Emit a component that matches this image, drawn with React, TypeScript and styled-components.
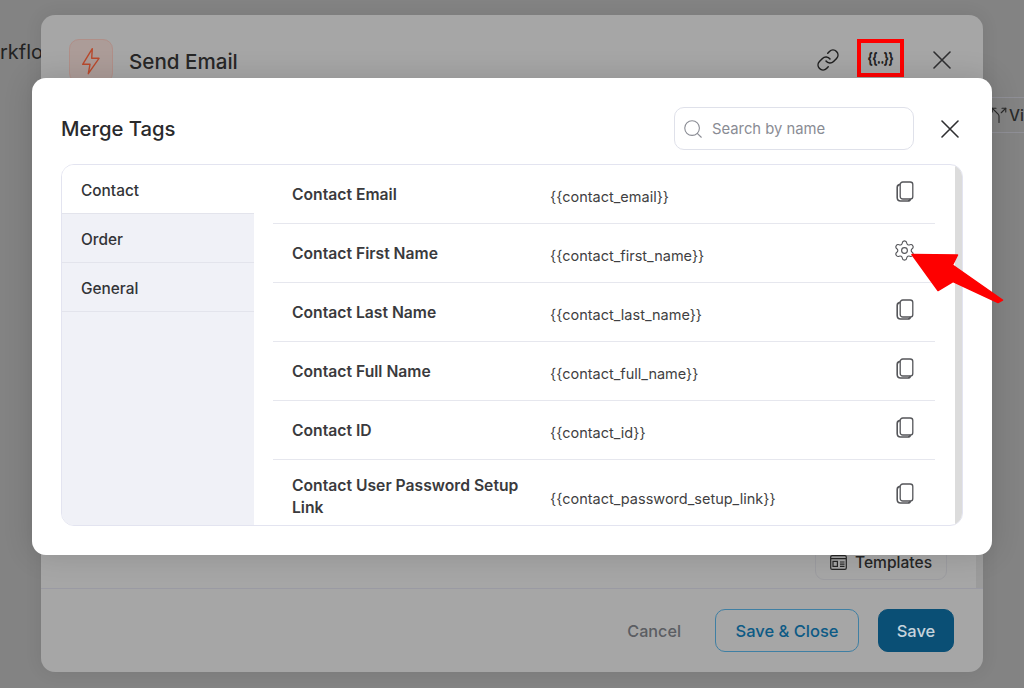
import styled, { createGlobalStyle } from 'styled-components';
import { Link, Search, Settings, Split } from 'lucide-react';

const GlobalStyle = createGlobalStyle`
  html, body {
    margin: 0;
    padding: 0;
    background: #838383;
    font-family: Inter, "Liberation Sans", sans-serif;
  }
  * { box-sizing: border-box; }
`;

const Page = styled.div`
  position: relative;
  width: 1024px;
  height: 688px;
  padding: 15px 41px 16px;
  overflow: hidden;
  background: #838383;
`;

const BehindTitle = styled.span`
  position: absolute;
  left: 0;
  top: 40px;
  font-size: 20px;
  color: #222;
`;

const BehindButton = styled.div`
  position: absolute;
  left: 975px;
  top: 97px;
  width: 49px;
  height: 36px;
  display: flex;
  align-items: center;
  gap: 1px;
  padding-left: 15px;
  border-top: 1px solid #8f8f96;
  border-bottom: 1px solid #8f8f96;
  font-size: 15.5px;
  font-weight: 500;
  color: #2a2a2a;
`;

const Card = styled.div`
  position: relative;
  height: 100%;
  display: flex;
  flex-direction: column;
  background: #a6a6a6;
  border-radius: 14px;
  box-shadow: 0 0 18px rgba(0, 0, 0, 0.08);
`;

const CardHeader = styled.div`
  height: 90px;
  display: flex;
  align-items: center;
  padding: 0 32px 0 28px;
  color: #222;
`;

const BoltBadge = styled.div`
  width: 44px;
  height: 44px;
  margin-top: 2px;
  display: flex;
  align-items: center;
  justify-content: center;
  border: 1px solid #b08f88;
  border-radius: 10px;
  background: #ac9c98;
  color: #b9492c;
`;

const CardTitle = styled.h1`
  margin: 2px 0 0 16px;
  flex: 1;
  font-size: 20.6px;
  font-weight: 500;
  color: #272727;
`;

const MergeButton = styled.div`
  width: 47px;
  height: 38px;
  margin: -4px 29px 0 17px;
  display: flex;
  align-items: center;
  justify-content: center;
  border: 4px solid #fe0000;
  color: #222;
`;

const MergeGlyph = styled.span`
  display: inline-block;
  transform: scaleX(0.66);
  font-size: 16px;
  font-weight: 800;
  letter-spacing: -0.6px;
`;

const CardBody = styled.div`
  flex: 1;
  display: flex;
  align-items: flex-end;
  justify-content: flex-end;
  padding: 0 29px 8px 0;
  border-right: 7px solid #9b9b9b;
`;

const TemplatesButton = styled.div`
  width: 132px;
  height: 35px;
  display: flex;
  align-items: center;
  justify-content: center;
  gap: 8px;
  border: 1px solid #9c9ca0;
  border-radius: 9px;
  font-size: 15.6px;
  font-weight: 500;
  color: #262626;
`;

const CardFooter = styled.div`
  height: 84px;
  display: flex;
  align-items: center;
  justify-content: flex-end;
  padding: 0 29px 0 0;
  border-top: 1px solid #9a9aa3;
`;

const CancelLabel = styled.span`
  margin-right: 34px;
  font-size: 16.2px;
  font-weight: 500;
  color: #5b5d62;
`;

const FooterButton = styled.div<{ $solid?: boolean }>`
  width: ${p => (p.$solid ? 76 : 144)}px;
  height: 43px;
  margin-left: ${p => (p.$solid ? 19 : 0)}px;
  display: flex;
  align-items: center;
  justify-content: center;
  border: 1px solid ${p => (p.$solid ? '#0a4f75' : '#3f7fa3')};
  border-radius: 10px;
  background: ${p => (p.$solid ? '#0a4f75' : 'transparent')};
  font-size: 16.5px;
  font-weight: 500;
  color: ${p => (p.$solid ? '#c5d3dc' : '#0d5a85')};
`;

const Modal = styled.div`
  position: absolute;
  left: 32px;
  top: 78px;
  width: 960px;
  height: 477px;
  display: flex;
  flex-direction: column;
  padding: 0 29px 29px;
  background: #fff;
  border-radius: 14px;
  box-shadow: 0 0 30px rgba(0, 0, 0, 0.14);
`;

const ModalHeader = styled.div`
  height: 86px;
  flex: none;
  padding-top: 15px;
  display: flex;
  align-items: center;
  padding-right: 4px;
`;

const ModalTitle = styled.h2`
  margin: 0;
  flex: 1;
  font-size: 20.3px;
  font-weight: 500;
  color: #2a2a2c;
`;

const SearchBox = styled.div`
  width: 240px;
  height: 43px;
  margin-right: 27px;
  display: flex;
  align-items: center;
  gap: 8px;
  padding-left: 7px;
  border: 1px solid #dfe1ea;
  border-radius: 10px;
  font-size: 14.8px;
  color: #8a8c94;
`;

const CloseButton = styled.div`
  display: flex;
  color: #2f2f31;
`;

const Panel = styled.div`
  flex: 1;
  min-height: 0;
  display: flex;
  border: 1px solid #e3e4f0;
  border-radius: 13px;
  overflow: hidden;
`;

const Sidebar = styled.div`
  width: 192px;
  flex: none;
  background: #f0f1f7;
`;

const SideItem = styled.div<{ $active?: boolean }>`
  height: 49px;
  display: flex;
  align-items: center;
  padding: 2px 0 0 19px;
  background: ${p => (p.$active ? '#fff' : 'transparent')};
  border-bottom: 1px solid #e3e4ec;
  font-size: 15.4px;
  font-weight: 500;
  color: #333437;
`;

const Rows = styled.div`
  flex: 1;
  padding: 0 20px 0 19px;
`;

const Row = styled.div<{ $tall?: boolean }>`
  height: ${p => (p.$tall ? 72 : 59)}px;
  display: flex;
  align-items: center;
  border-bottom: ${p => (p.$tall ? 'none' : '1px solid #e6e7ee')};
`;

const RowLabel = styled.div`
  width: 277px;
  flex: none;
  padding: 0 20px 0 19px;
  margin-top: 2px;
  font-size: 15.7px;
  line-height: 22px;
  font-weight: 600;
  color: #3a3a3d;
`;

const RowTag = styled.div`
  flex: 1;
  padding-top: 4px;
  font-size: 14.5px;
  color: #3f3f42;
`;

const RowAction = styled.div`
  width: 61px;
  flex: none;
  display: flex;
  justify-content: center;
  margin-top: -5px;
  color: #55565a;
`;

const ScrollTrack = styled.div`
  width: 7px;
  flex: none;
  background: #dcdcdc;
`;

const ArrowMark = styled.svg`
  position: absolute;
  left: 905px;
  top: 245px;
`;

function CopyIcon() {
  return (
    <svg width="18" height="21" viewBox="0 0 18 21" fill="none" stroke="currentColor" strokeWidth="1.3">
      <rect x="4.2" y="1" width="12.6" height="17" rx="2.6" />
      <path d="M4.2 3.4C2.4 3.6 1.2 4.6 1.2 6.4v10.2c0 2.2 1.4 3.4 3.4 3.4h7.2c1.6 0 2.4-.8 2.6-2" strokeWidth="1.6" />
    </svg>
  );
}

function TemplatesIcon() {
  return (
    <svg width="17" height="15" viewBox="0 0 17 15" fill="none" stroke="currentColor" strokeWidth="1.2">
      <rect x="0.7" y="0.7" width="15.6" height="13.6" rx="1.4" />
      <path d="M1 3.6h15M10 7h4.5M10 9.2h4.5M10 11.4h4.5" />
      <rect x="3" y="6.4" width="4.4" height="5" />
    </svg>
  );
}

function BoltIcon() {
  return (
    <svg width="20" height="28" viewBox="0 0 20 28" fill="none" stroke="currentColor" strokeWidth="1.4" strokeLinejoin="round">
      <path d="M11.3 1.7 1.7 17.3H9L7.3 26.7 18 11.3h-7.3z" />
    </svg>
  );
}

function CloseIcon() {
  return (
    <svg width="18" height="18" viewBox="0 0 18 18" fill="none" stroke="currentColor" strokeWidth="1.6" strokeLinecap="round">
      <path d="M1 1l16 16M17 1 1 17" />
    </svg>
  );
}

const rows = [
  { label: 'Contact Email', tag: '{{contact_email}}' },
  { label: 'Contact First Name', tag: '{{contact_first_name}}', gear: true },
  { label: 'Contact Last Name', tag: '{{contact_last_name}}' },
  { label: 'Contact Full Name', tag: '{{contact_full_name}}' },
  { label: 'Contact ID', tag: '{{contact_id}}' },
  { label: 'Contact User Password Setup Link', tag: '{{contact_password_setup_link}}', tall: true },
];

export default function App() {
  return (
    <Page>
      <GlobalStyle />
      <BehindTitle>rkflow</BehindTitle>
      <BehindButton>
        <Split size={18} strokeWidth={1.5} />
        Vi
      </BehindButton>
      <Card>
        <CardHeader>
          <BoltBadge>
            <BoltIcon />
          </BoltBadge>
          <CardTitle>Send Email</CardTitle>
          <Link size={24} strokeWidth={1.5} color="#1f1f1f" />
          <MergeButton>
            <MergeGlyph>{'{{..}}'}</MergeGlyph>
          </MergeButton>
          <CloseButton>
            <CloseIcon />
          </CloseButton>
        </CardHeader>
        <CardBody>
          <TemplatesButton>
            <TemplatesIcon />
            Templates
          </TemplatesButton>
        </CardBody>
        <CardFooter>
          <CancelLabel>Cancel</CancelLabel>
          <FooterButton>Save &amp; Close</FooterButton>
          <FooterButton $solid>Save</FooterButton>
        </CardFooter>
      </Card>
      <Modal>
        <ModalHeader>
          <ModalTitle>Merge Tags</ModalTitle>
          <SearchBox>
            <Search size={22} strokeWidth={1.2} />
            Search by name
          </SearchBox>
          <CloseButton>
            <CloseIcon />
          </CloseButton>
        </ModalHeader>
        <Panel>
          <Sidebar>
            <SideItem $active>Contact</SideItem>
            <SideItem>Order</SideItem>
            <SideItem>General</SideItem>
          </Sidebar>
          <Rows>
            {rows.map(row => (
              <Row key={row.label} $tall={row.tall}>
                <RowLabel>{row.label}</RowLabel>
                <RowTag>{row.tag}</RowTag>
                <RowAction>
                  {row.gear ? <Settings size={23} strokeWidth={1.2} /> : <CopyIcon />}
                </RowAction>
              </Row>
            ))}
          </Rows>
          <ScrollTrack />
        </Panel>
      </Modal>
      <ArrowMark width="104" height="64" viewBox="905 245 104 64">
        <polygon
          points="912,254.5 957.5,255 952.5,265 1002.5,300 998,302.5 953,281.5 938,290.5"
          fill="#fe0000"
          stroke="#fe0000"
          strokeWidth="1.5"
          strokeLinejoin="round"
        />
      </ArrowMark>
    </Page>
  );
}
